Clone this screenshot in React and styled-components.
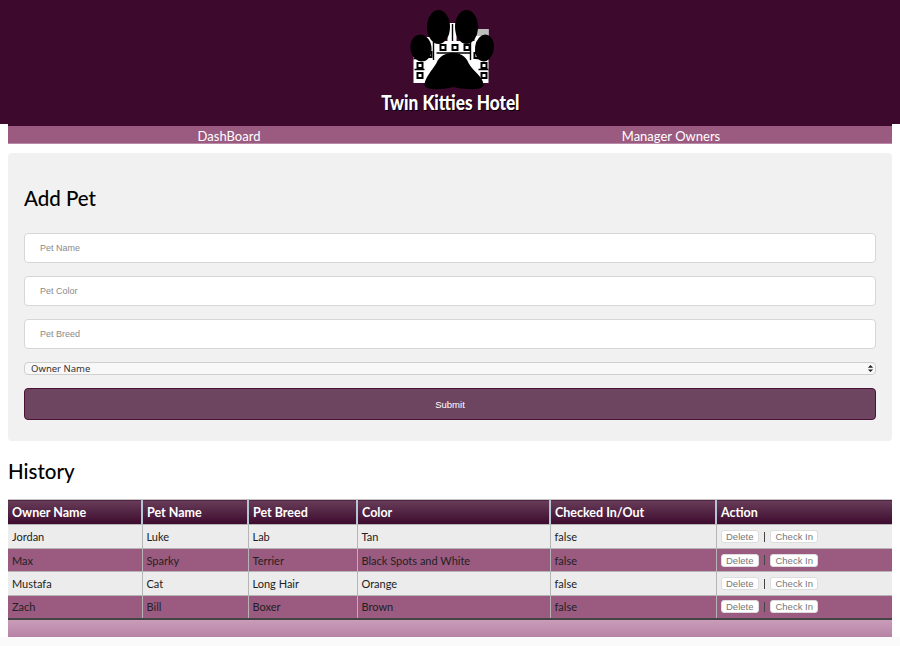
import React from "react";
import styled, { createGlobalStyle } from "styled-components";

const comic = `"Comic Sans MS", "Lato", sans-serif`;

const pets = [
  { owner: "Jordan", name: "Luke", breed: "Lab", color: "Tan" },
  { owner: "Max", name: "Sparky", breed: "Terrier", color: "Black Spots and White" },
  { owner: "Mustafa", name: "Cat", breed: "Long Hair", color: "Orange" },
  { owner: "Zach", name: "Bill", breed: "Boxer", color: "Brown" },
];

const App = () => {
  return (
    <Page>
      <GlobalStyle />
      <Header>
        <Logo />
        <LogoText>Twin Kitties Hotel</LogoText>
      </Header>
      <Nav>
        <NavLink>DashBoard</NavLink>
        <NavLink>Manager Owners</NavLink>
      </Nav>
      <FormCard>
        <FormTitle>Add Pet</FormTitle>
        <TextInput placeholder="Pet Name" />
        <TextInput placeholder="Pet Color" />
        <TextInput placeholder="Pet Breed" />
        <SelectWrap>
          <OwnerSelect defaultValue="">
            <option value="">Owner Name</option>
          </OwnerSelect>
          <SelectArrows viewBox="0 0 8 10">
            <path d="M1 4 L4 1 L7 4 Z M1 6 L4 9 L7 6 Z" fill="#222" />
          </SelectArrows>
        </SelectWrap>
        <SubmitButton>Submit</SubmitButton>
      </FormCard>
      <History>History</History>
      <PetTable>
        <colgroup>
          <col style={{ width: 134 }} />
          <col style={{ width: 106 }} />
          <col style={{ width: 109 }} />
          <col style={{ width: 193 }} />
          <col style={{ width: 166 }} />
          <col />
        </colgroup>
        <thead>
          <tr>
            <HeadCell>Owner Name</HeadCell>
            <HeadCell>Pet Name</HeadCell>
            <HeadCell>Pet Breed</HeadCell>
            <HeadCell>Color</HeadCell>
            <HeadCell>Checked In/Out</HeadCell>
            <HeadCell>Action</HeadCell>
          </tr>
        </thead>
        <tbody>{pets.map(renderRow)}</tbody>
        <tfoot>
          <tr>
            <FootCell colSpan={6} />
          </tr>
        </tfoot>
      </PetTable>
      <PageEnd />
    </Page>
  );
};

const renderRow = (pet, i) => {
  const alt = i % 2 === 1;
  return (
    <Row key={pet.owner} $alt={alt}>
      <Cell $alt={alt}>{pet.owner}</Cell>
      <Cell $alt={alt}>{pet.name}</Cell>
      <Cell $alt={alt}>{pet.breed}</Cell>
      <Cell $alt={alt}>{pet.color}</Cell>
      <Cell $alt={alt}>false</Cell>
      <Cell $alt={alt}>
        <Actions>
          <ActionButton>Delete</ActionButton>
          <Divider />
          <ActionButton>Check In</ActionButton>
        </Actions>
      </Cell>
    </Row>
  );
};

const windows = [
  [416, 62],
  [416, 72],
  [425, 51],
  [439, 44],
  [451, 44],
  [463, 44],
  [473, 52],
  [480, 62],
  [480, 72],
];

const Logo = () => (
  <LogoSvg viewBox="402.5 5 95 85">
    <path d="M413 83 V57 H421 V37 H433 V41 H447 V23 H456 V41 H474 V29 H488 V83 Z" fill="#fff" />
    <path d="M474 29 H488 V36 H474 Z" fill="#bdbdbd" />
    {windows.map(([x, y]) => (
      <g key={`${x}-${y}`}>
        <rect x={x} y={y} width="7" height="7" fill="#000" />
        <rect x={x + 2} y={y + 2} width="3" height="3" fill="#fff" />
      </g>
    ))}
    <path d="M413 58.5 H425 M476 58.5 H488 M433 42 V60 M470 40 V60 M436 53 H470 M452 24 V41 M414 69.5 H424 M478 69.5 H488" stroke="#000" strokeWidth="1.4" fill="none" />
    <ellipse cx="438" cy="27" rx="11.5" ry="17" fill="#000" />
    <ellipse cx="466" cy="27" rx="11.5" ry="17" fill="#000" />
    <ellipse cx="420.5" cy="48" rx="10.5" ry="13.5" fill="#000" transform="rotate(-8 420.5 48)" />
    <ellipse cx="484" cy="48" rx="9.5" ry="13.5" fill="#000" transform="rotate(8 484 48)" />
    <path d="M424 84 C425 77 431 71 436 63 C441 50 463 49 468 63 C472 71 482 76 483 84 C484 91 466 90 453 87 C440 90 423 91 424 84 Z" fill="#000" />
  </LogoSvg>
);

const GlobalStyle = createGlobalStyle`
  html, body {
    margin: 0;
    padding: 0;
    background: #fff;
  }
`;

const Page = styled.div`
  width: 900px;
  height: 646px;
  overflow: hidden;
  font-family: ${comic};
`;
const Header = styled.header`
  height: 124px;
  background: #3d0a2d;
  display: flex;
  flex-direction: column;
  align-items: center;
  padding-top: 5px;
  box-sizing: border-box;
`;
const LogoSvg = styled.svg`
  width: 95px;
  height: 85px;
  display: block;
  flex: none;
`;
const LogoText = styled.div`
  color: #fff;
  font-family: "Lato", sans-serif;
  font-weight: 900;
  font-size: 21px;
  line-height: 24px;
  margin-top: 0;
  white-space: nowrap;
  transform: scaleX(0.82);
  text-shadow: 1px 1px 0 #000;
`;
const Nav = styled.nav`
  margin: 0 8px;
  height: 20px;
  box-sizing: border-box;
  background: #9b5a80;
  border-top: 2px solid #3d0a2d;
  border-bottom: 1px solid #b98aa8;
  display: grid;
  grid-template-columns: 1fr 1fr;
`;
const NavLink = styled.a`
  color: #fff;
  font-size: 13px;
  line-height: 20px;
  text-align: center;
`;
const FormCard = styled.section`
  margin: 9px 8px 0;
  height: 288px;
  box-sizing: border-box;
  padding: 16px;
  background: #f1f1f1;
  border-radius: 4px;
  display: flex;
  flex-direction: column;
`;
const FormTitle = styled.h2`
  margin: 16px 0 22px;
  font-size: 20.5px;
  line-height: 26px;
  font-weight: 500;
  color: #000;
`;
const TextInput = styled.input`
  height: 30px;
  box-sizing: border-box;
  margin-bottom: 13px;
  padding: 0 15px;
  background: #fff;
  border: 1px solid #d6d6d6;
  border-radius: 4px;
  font-family: "Liberation Sans", sans-serif;
  font-size: 9px;
  &::placeholder {
    color: #8a8a8a;
    opacity: 1;
  }
`;
const SelectWrap = styled.div`
  position: relative;
  height: 13px;
  margin-bottom: 13px;
`;
const OwnerSelect = styled.select`
  appearance: none;
  display: block;
  width: 100%;
  height: 13px;
  box-sizing: border-box;
  padding: 0 6px;
  background: #f8f8f8;
  border: 1px solid #cfcfcf;
  border-radius: 4px;
  font-family: "Noto Sans", sans-serif;
  font-size: 9.5px;
  line-height: 11px;
  color: #333;
`;
const SelectArrows = styled.svg`
  position: absolute;
  right: 2px;
  top: 2px;
  width: 7px;
  height: 9px;
`;
const SubmitButton = styled.button`
  height: 32px;
  box-sizing: border-box;
  background: #6e4560;
  border: 1px solid #4a1238;
  border-radius: 4px;
  color: #fff;
  font-family: "Liberation Sans", sans-serif;
  font-size: 9.5px;
`;
const History = styled.h2`
  margin: 17px 8px 15px;
  font-size: 20.5px;
  line-height: 26px;
  font-weight: 500;
  color: #000;
`;
const PetTable = styled.table`
  width: 884px;
  margin: 0 8px;
  border-collapse: collapse;
  table-layout: fixed;
`;
const HeadCell = styled.th`
  height: 25px;
  box-sizing: border-box;
  padding: 0 4px;
  text-align: left;
  font-size: 12.5px;
  font-weight: 700;
  color: #fff;
  background: linear-gradient(#683d5a, #3d0a2d);
  border-top: 1px solid #c4c4c4;
  border-left: 2px solid #b4c6d6;
  border-right: 2px solid #b4c6d6;
  &:first-child {
    border-left: 0;
  }
  &:last-child {
    border-right: 0;
  }
`;
const Row = styled.tr`
  background: ${({ $alt }) => ($alt ? "#9b5a80" : "#ececec")};
`;
const Cell = styled.td`
  height: ${({ $alt }) => ($alt ? "23px" : "24px")};
  box-sizing: border-box;
  padding: 0 4px;
  font-size: 11px;
  color: #222;
  border: 1px solid #b5b5b5;
  &:first-child {
    border-left: 0;
  }
  &:last-child {
    border-right: 0;
  }
`;
const Actions = styled.div`
  display: flex;
  align-items: center;
  gap: 5px;
`;
const ActionButton = styled.button`
  height: 13px;
  padding: 0 4.5px;
  background: #fff;
  border: 1px solid #ddd;
  border-radius: 3px;
  color: #777;
  font-family: "Liberation Sans", sans-serif;
  font-size: 9.5px;
  line-height: 11px;
`;
const Divider = styled.span`
  width: 1px;
  height: 10px;
  background: #444;
`;
const FootCell = styled.td`
  height: 18px;
  padding: 0;
  box-sizing: border-box;
  background: linear-gradient(#c99cb9, #b783a5);
  border-top: 2px solid #444;
`;
const PageEnd = styled.div`
  height: 9px;
  background: #fafafa;
`;

export default App;
